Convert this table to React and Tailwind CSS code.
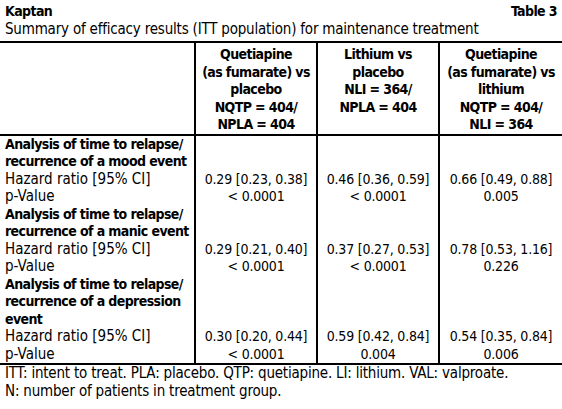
import React from "react";

const GROUPS = [
  {
    title: ["Analysis of time to relapse/", "recurrence of a mood event"],
    hr: ["0.29 [0.23, 0.38]", "0.46 [0.36, 0.59]", "0.66 [0.49, 0.88]"],
    p: ["< 0.0001", "< 0.0001", "0.005"],
  },
  {
    title: ["Analysis of time to relapse/", "recurrence of a manic event"],
    hr: ["0.29 [0.21, 0.40]", "0.37 [0.27, 0.53]", "0.78 [0.53, 1.16]"],
    p: ["< 0.0001", "< 0.0001", "0.226"],
  },
  {
    title: ["Analysis of time to relapse/", "recurrence of a depression", "event"],
    hr: ["0.30 [0.20, 0.44]", "0.59 [0.42, 0.84]", "0.54 [0.35, 0.84]"],
    p: ["< 0.0001", "0.004", "0.006"],
  },
];

const HEADS = [
  ["Quetiapine", "(as fumarate) vs", "placebo", "NQTP = 404/", "NPLA = 404"],
  ["Lithium vs", "placebo", "NLI = 364/", "NPLA = 404"],
  ["Quetiapine", "(as fumarate) vs", "lithium", "NQTP = 404/", "NLI = 364"],
];

const cell = "border-l-2 border-black text-center px-0 whitespace-nowrap";
const num = cell + " text-[14px] tracking-[-0.2px]";
const bold = "font-bold text-[14px] tracking-[-0.6px]";

export default function App() {
  return (
    <div
      className="w-[562px] h-[409px] overflow-hidden bg-white text-black text-[15px] leading-[17.5px]"
      style={{ fontFamily: '"DejaVu Sans Condensed", "Liberation Sans", sans-serif' }}
    >
      <div className={"flex justify-between items-end px-[5px] pt-[3px] " + bold}>
        <span>Kaptan</span>
        <span>Table 3</span>
      </div>
      <div className="px-[5px] pb-[3px] whitespace-nowrap tracking-[-0.2px]">
        Summary of efficacy results (ITT population) for maintenance treatment
      </div>
      <table className="w-full border-collapse table-fixed border-y-2 border-black">
        <colgroup>
          <col className="w-[195px]" />
          <col className="w-[122px]" />
          <col className="w-[122px]" />
          <col />
        </colgroup>
        <thead>
          <tr className="border-b-2 border-black">
            <th className="h-[90px]"></th>
            {HEADS.map((h, i) => (
              <th key={i} className={cell + " align-top pt-[3px] " + bold}>
                {h.map((l, j) => (
                  <div key={j}>{l}</div>
                ))}
              </th>
            ))}
          </tr>
        </thead>
        <tbody>
          {GROUPS.map((g, gi) => (
            <React.Fragment key={gi}>
              <tr>
                <td className={"px-[5px] whitespace-nowrap " + bold}>
                  {g.title.map((l, j) => (
                    <div key={j}>{l}</div>
                  ))}
                </td>
                <td className={cell}></td>
                <td className={cell}></td>
                <td className={cell}></td>
              </tr>
              <tr>
                <td className="px-[5px] whitespace-nowrap">Hazard ratio [95% CI]</td>
                {g.hr.map((v, i) => (
                  <td key={i} className={num}>{v}</td>
                ))}
              </tr>
              <tr>
                <td className="px-[5px]">p-Value</td>
                {g.p.map((v, i) => (
                  <td key={i} className={num}>{v}</td>
                ))}
              </tr>
            </React.Fragment>
          ))}
        </tbody>
      </table>
      <div className="px-[5px] whitespace-nowrap tracking-[-0.2px]">
        <div>ITT: intent to treat. PLA: placebo. QTP: quetiapine. LI: lithium. VAL: valproate.</div>
        <div>N: number of patients in treatment group.</div>
      </div>
    </div>
  );
}
